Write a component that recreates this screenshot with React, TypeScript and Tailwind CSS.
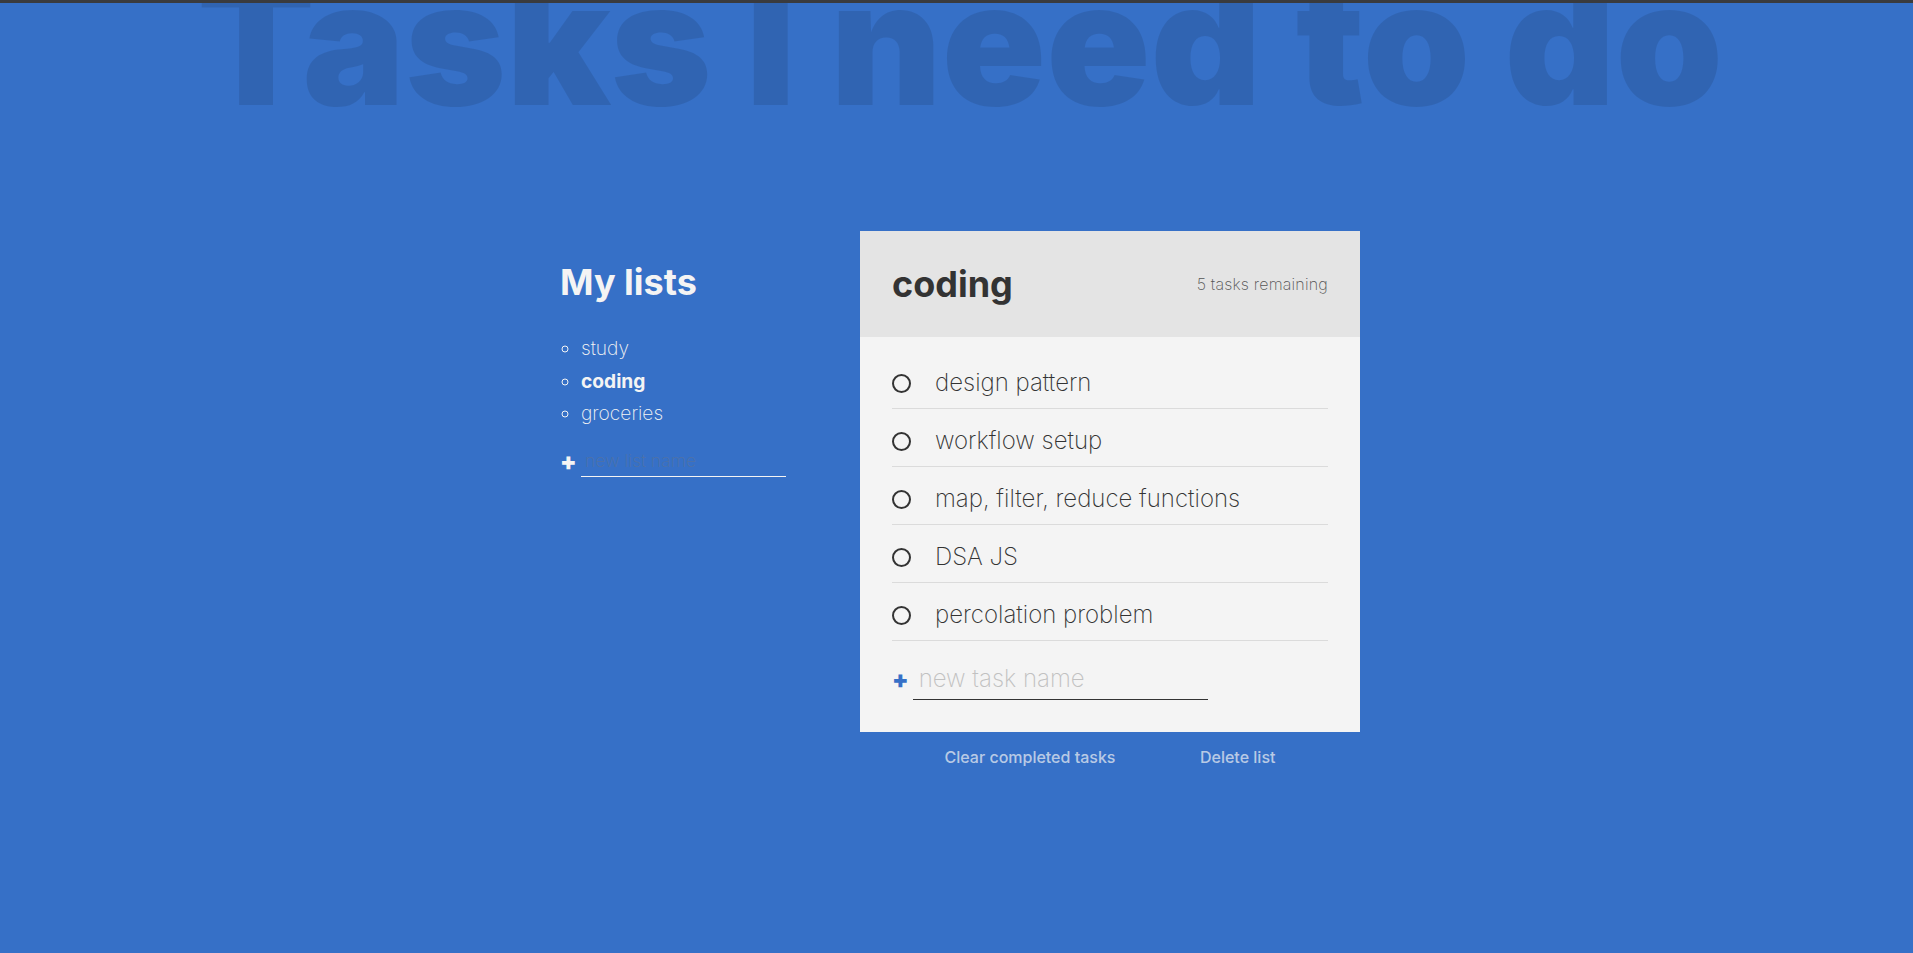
import React from "react";

const lists = [
  { name: "study", active: false },
  { name: "coding", active: true },
  { name: "groceries", active: false },
];

const tasks = [
  "design pattern",
  "workflow setup",
  "map, filter, reduce functions",
  "DSA JS",
  "percolation problem",
];

export default function App() {
  return (
    <div className="min-h-screen bg-[#3670c7] font-['Inter',sans-serif] font-[250] text-[#f4f4f4]">
      <div className="h-[3px] bg-[#3a3b3e]" />
      <div className="overflow-hidden">
        <div className="grid grid-cols-[1fr_300px_500px_1fr] pl-[7px]">
          <h1 className="col-span-4 mt-[-47px] mb-[103px] text-center text-[172px] leading-none font-black tracking-[0px] text-black/10 whitespace-nowrap">
            Tasks I need to do
          </h1>

          <div className="col-start-2">
            <h2 className="mt-[30px] text-[36px] leading-[42px] font-bold">My lists</h2>
            <ul className="mt-[29px] mb-[17px] list-[circle] pl-[21px] text-[19.2px] leading-[32.64px]">
              {lists.map((l) => (
                <li key={l.name} className={l.active ? "font-bold" : ""}>
                  {l.name}
                </li>
              ))}
            </ul>
            <form className="flex">
              <button type="button" className="mr-[4px] text-[24px] leading-[28px] font-black">
                +
              </button>
              <input
                type="text"
                placeholder="new list name"
                className="w-[205px] border-b border-[#f4f4f4] bg-transparent p-[4.4px] text-[17.6px] leading-[20.6px] outline-none placeholder:text-[#4f72a6]"
              />
            </form>
          </div>

          <div className="col-start-3">
            <div className="bg-[#f4f4f4] text-[#333]">
              <div className="flex h-[106px] items-center justify-between bg-[#e4e4e4] px-8">
                <h2 className="mr-[36px] text-[36px] leading-[42px] font-bold">coding</h2>
                <p className="text-[16px] tracking-[0.2px] text-[#555]">5 tasks remaining</p>
              </div>
              <div className="p-8">
                {tasks.map((t) => (
                  <div key={t} className="mb-[18px] border-b border-black/10 pb-[11px]">
                    <label className="flex items-center text-[24px] leading-[28px]">
                      <span className="mr-[24px] h-[19px] w-[19px] rounded-full border-2 border-[#333]" />
                      {t}
                    </label>
                  </div>
                ))}
                <form className="flex">
                  <button type="button" className="mr-[4px] text-[24px] leading-[28px] font-black text-[#3670c7]">
                    +
                  </button>
                  <input
                    type="text"
                    placeholder="new task name"
                    className="w-[295px] border-b border-[#333] bg-transparent p-[6px] text-[24px] leading-[28px] outline-none placeholder:text-[#c1c1c1]"
                  />
                </form>
              </div>
            </div>
            <div className="mt-[16px] flex justify-evenly text-[16px] leading-[19px] font-medium text-[#f4f4f4]/70">
              <button type="button">Clear completed tasks</button>
              <button type="button">Delete list</button>
            </div>
          </div>
        </div>
      </div>
    </div>
  );
}
